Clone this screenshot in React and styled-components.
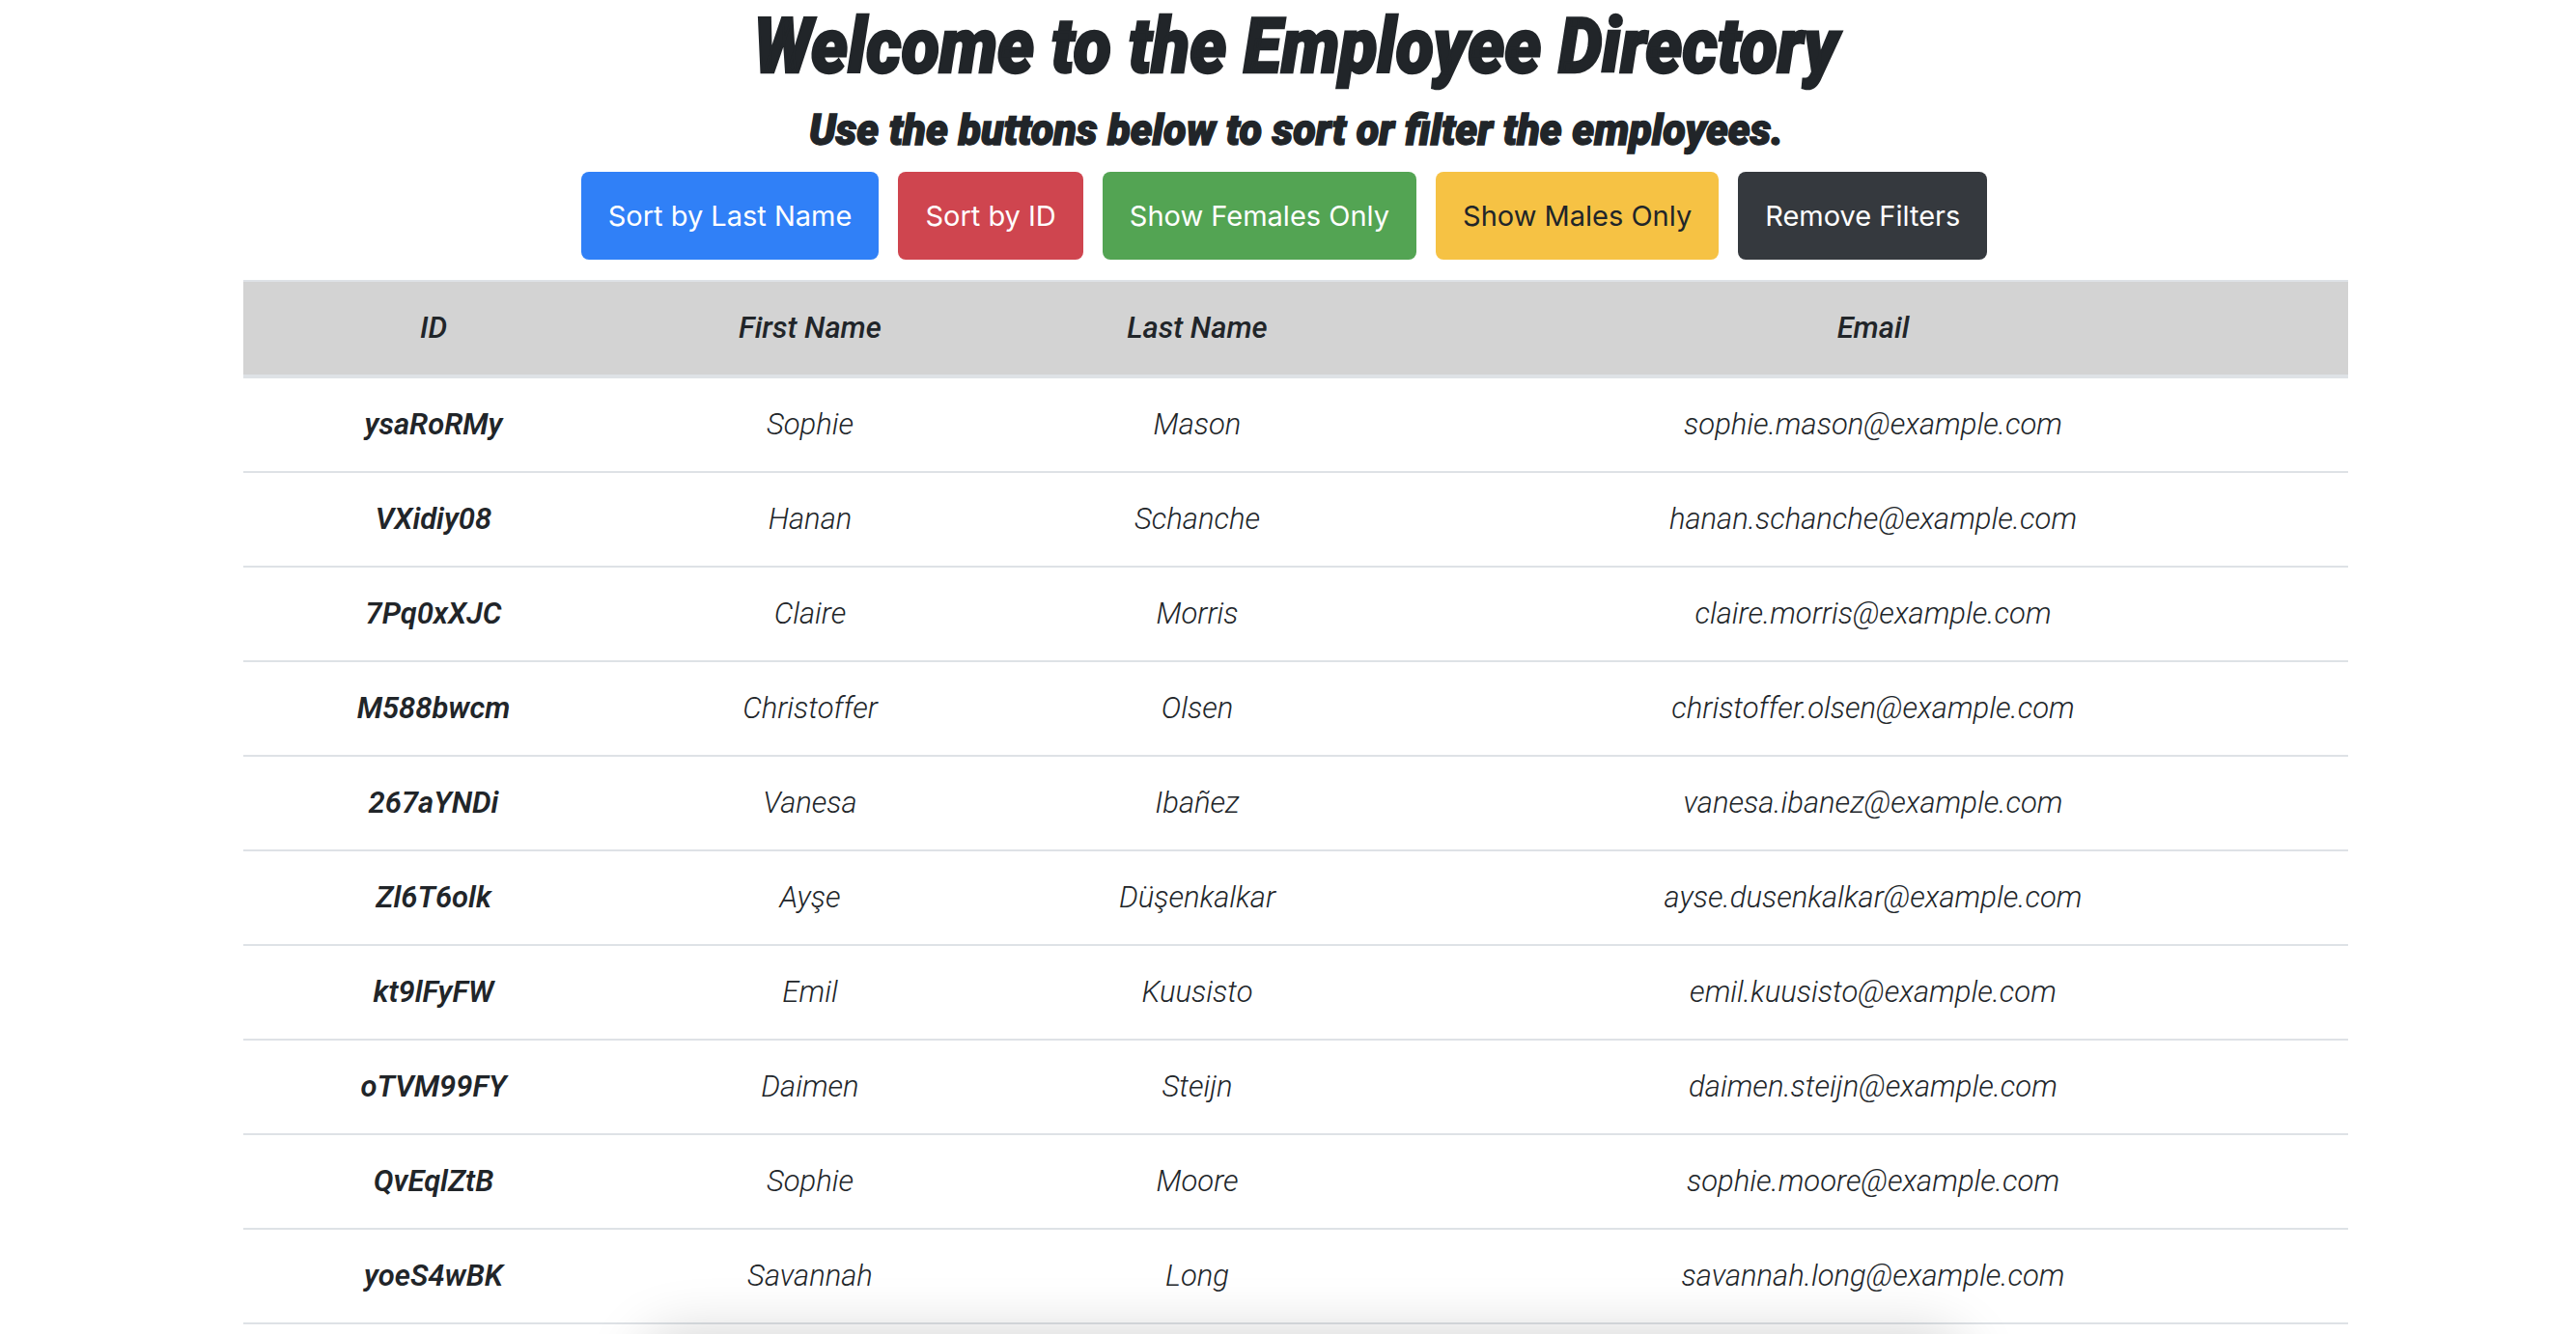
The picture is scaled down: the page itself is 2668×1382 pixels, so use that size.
import React from "react";
import styled, { createGlobalStyle } from "styled-components";

const GlobalStyle = createGlobalStyle`
  html, body {
    margin: 0;
    padding: 0;
    background: #ffffff;
    color: #212529;
    font-family: Roboto, "Liberation Sans", sans-serif;
  }
  * {
    box-sizing: border-box;
  }
`;

const Page = styled.div`
  width: 2180px;
  margin-left: 252px;
  display: flex;
  flex-direction: column;
  align-items: center;
`;

const Title = styled.h1`
  margin: 0;
  height: 96px;
  font-size: 80px;
  line-height: 96px;
  font-weight: 900;
  font-style: italic;
  white-space: nowrap;
  -webkit-text-stroke: 2.5px #212529;
  transform: scaleX(0.9);
`;

const Subtitle = styled.h4`
  margin: 12px 0 0;
  height: 54px;
  font-size: 45px;
  line-height: 54px;
  font-weight: 900;
  font-style: italic;
  white-space: nowrap;
  -webkit-text-stroke: 1.5px #212529;
  transform: scaleX(0.96);
`;

const ButtonRow = styled.div`
  display: flex;
  gap: 20px;
  margin-top: 16px;
  padding-right: 24px;
`;

const colors = {
  primary: { bg: "#3080f7", fg: "#ffffff" },
  danger: { bg: "#cf454f", fg: "#ffffff" },
  success: { bg: "#53a453", fg: "#ffffff" },
  warning: { bg: "#f6c244", fg: "#212529" },
  dark: { bg: "#35393e", fg: "#ffffff" },
};

const Button = styled.button`
  height: 91px;
  padding: 0 28px;
  border: none;
  border-radius: 8px;
  background: ${({ $variant }) => colors[$variant].bg};
  color: ${({ $variant }) => colors[$variant].fg};
  font-family: Inter, Roboto, sans-serif;
  font-size: 29px;
  font-weight: 400;
  cursor: pointer;
`;

const Table = styled.table`
  width: 2180px;
  margin-top: 21px;
  border-collapse: collapse;
  table-layout: fixed;
  font-family: Roboto, "Liberation Sans", sans-serif;
  font-style: italic;
  font-size: 31px;
  line-height: 48px;
  color: #212529;
`;

const HeadRow = styled.tr`
  background: #d3d3d3;
  border-top: 2px solid #dee2e6;
  border-bottom: 4px solid #dee2e6;
`;

const HeadCell = styled.th`
  padding: 24px 12px;
  font-weight: 500;
  text-align: center;
`;

const Row = styled.tr`
  border-bottom: 2px solid #dee2e6;
`;

const IdCell = styled.th`
  padding: 24px 12px;
  font-weight: 600;
  text-align: center;
`;

const Cell = styled.td`
  padding: 24px 12px;
  font-weight: 300;
  text-align: center;
`;

const BottomShade = styled.div`
  position: fixed;
  left: 680px;
  width: 1340px;
  top: 1398px;
  height: 100px;
  border-radius: 24px;
  background: #ffffff;
  box-shadow: 0 0 60px 16px rgba(0, 0, 0, 0.18);
`;

const employees = [
  ["ysaRoRMy", "Sophie", "Mason", "sophie.mason@example.com"],
  ["VXidiy08", "Hanan", "Schanche", "hanan.schanche@example.com"],
  ["7Pq0xXJC", "Claire", "Morris", "claire.morris@example.com"],
  ["M588bwcm", "Christoffer", "Olsen", "christoffer.olsen@example.com"],
  ["267aYNDi", "Vanesa", "Ibañez", "vanesa.ibanez@example.com"],
  ["Zl6T6olk", "Ayşe", "Düşenkalkar", "ayse.dusenkalkar@example.com"],
  ["kt9lFyFW", "Emil", "Kuusisto", "emil.kuusisto@example.com"],
  ["oTVM99FY", "Daimen", "Steijn", "daimen.steijn@example.com"],
  ["QvEqlZtB", "Sophie", "Moore", "sophie.moore@example.com"],
  ["yoeS4wBK", "Savannah", "Long", "savannah.long@example.com"],
];

const buttons = [
  ["primary", "Sort by Last Name"],
  ["danger", "Sort by ID"],
  ["success", "Show Females Only"],
  ["warning", "Show Males Only"],
  ["dark", "Remove Filters"],
];

export default function App() {
  return (
    <>
      <GlobalStyle />
      <Page>
        <Title>Welcome to the Employee Directory</Title>
        <Subtitle>Use the buttons below to sort or filter the employees.</Subtitle>
        <ButtonRow>
          {buttons.map(([variant, label]) => (
            <Button key={label} $variant={variant}>
              {label}
            </Button>
          ))}
        </ButtonRow>
        <Table>
          <colgroup>
            <col style={{ width: 394 }} />
            <col style={{ width: 386 }} />
            <col style={{ width: 416 }} />
            <col />
          </colgroup>
          <thead>
            <HeadRow>
              <HeadCell>ID</HeadCell>
              <HeadCell>First Name</HeadCell>
              <HeadCell>Last Name</HeadCell>
              <HeadCell>Email</HeadCell>
            </HeadRow>
          </thead>
          <tbody>
            {employees.map(([id, first, last, email]) => (
              <Row key={id}>
                <IdCell scope="row">{id}</IdCell>
                <Cell>{first}</Cell>
                <Cell>{last}</Cell>
                <Cell>{email}</Cell>
              </Row>
            ))}
          </tbody>
        </Table>
      </Page>
      <BottomShade />
    </>
  );
}
